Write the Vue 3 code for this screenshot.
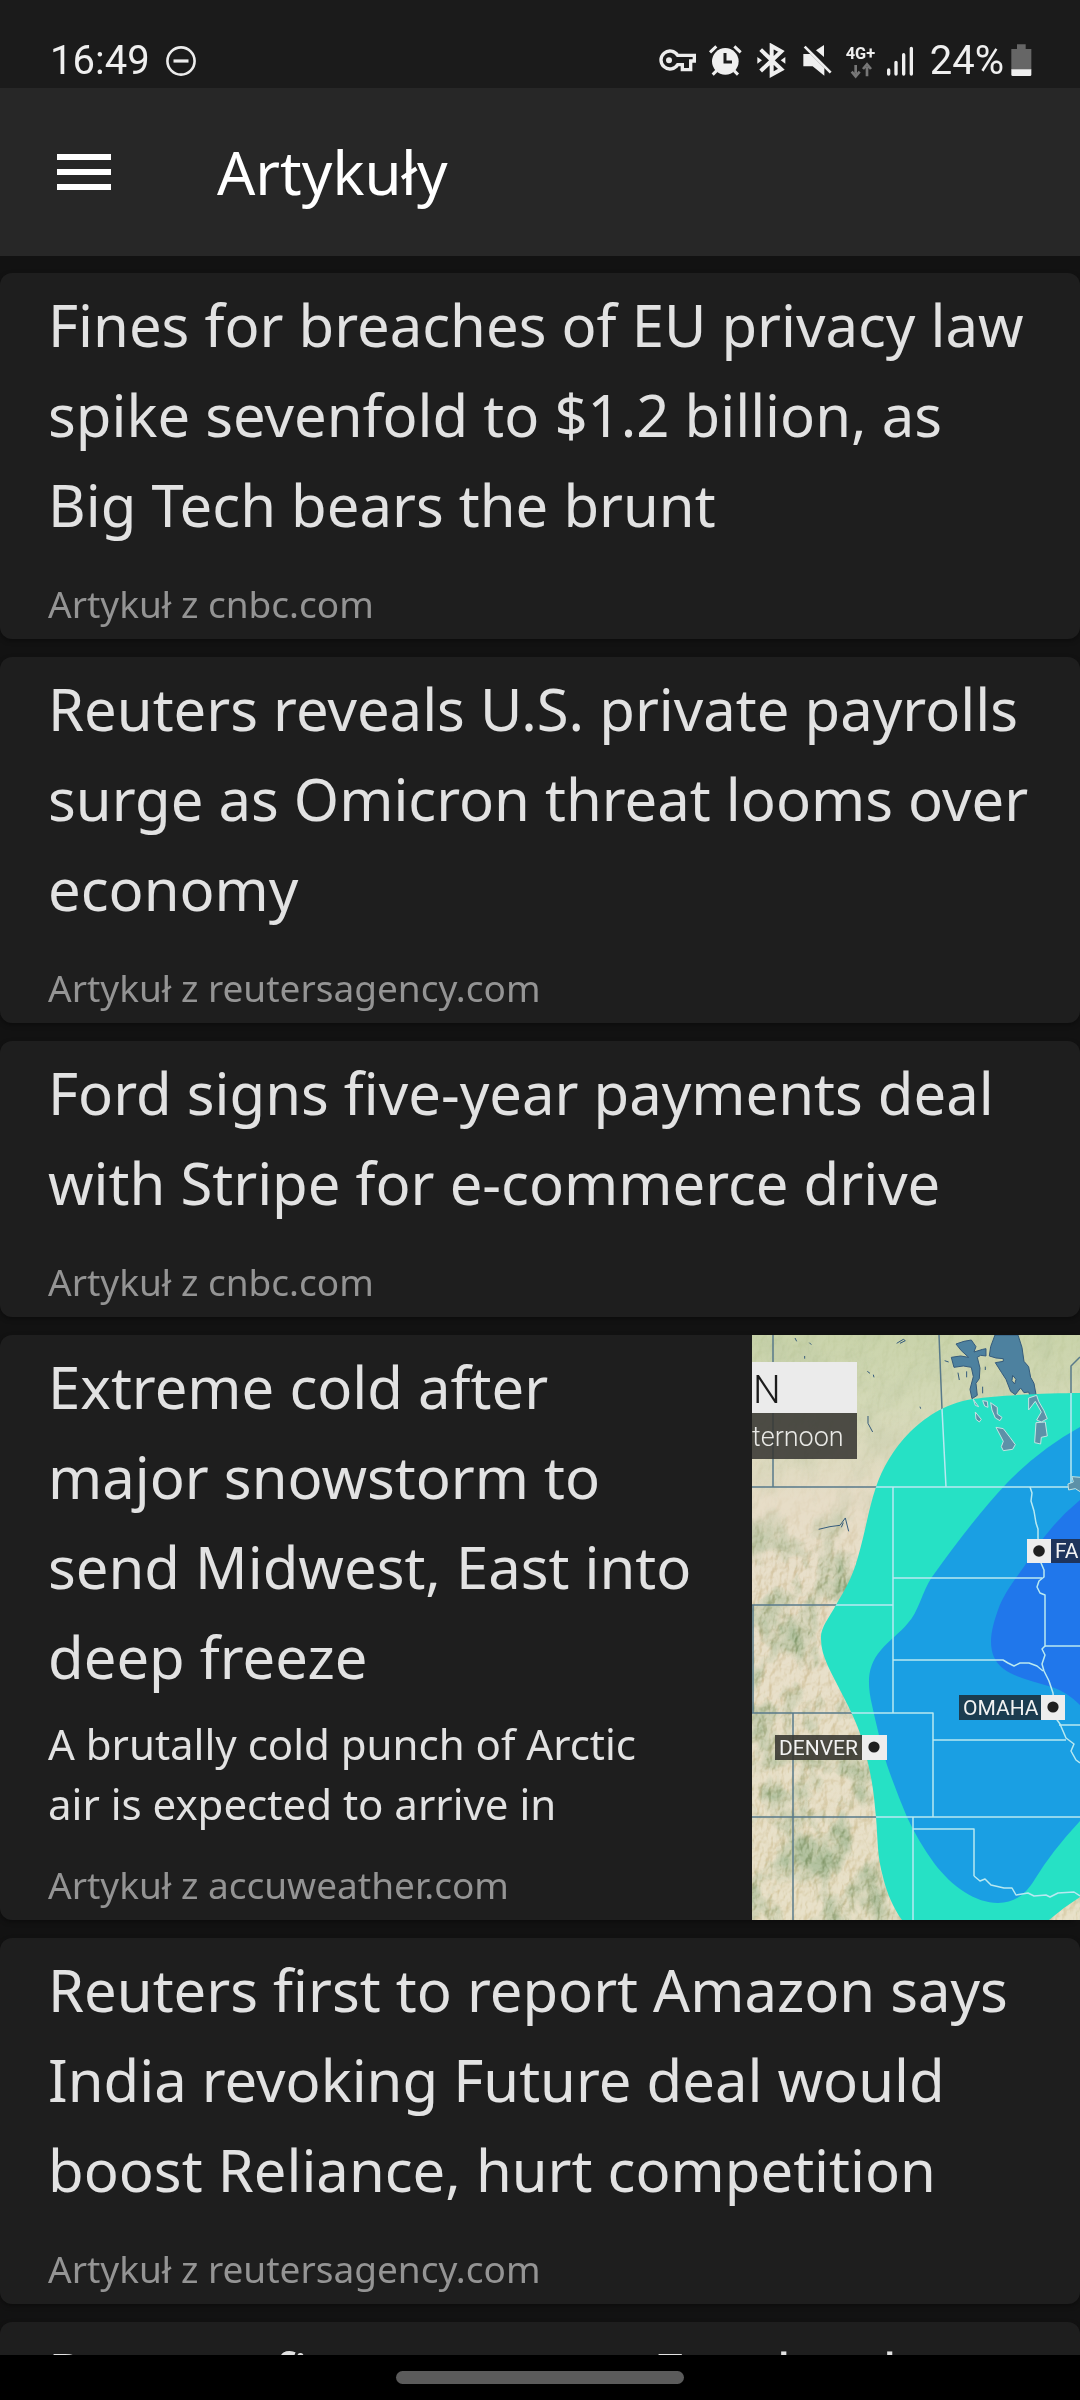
<script setup>
const articles = [
  {
    lines: ['Fines for breaches of EU privacy law', 'spike sevenfold to $1.2 billion, as', 'Big Tech bears the brunt'],
    source: 'cnbc.com'
  },
  {
    lines: ['Reuters reveals U.S. private payrolls', 'surge as Omicron threat looms over', 'economy'],
    source: 'reutersagency.com'
  },
  {
    lines: ['Ford signs five-year payments deal', 'with Stripe for e-commerce drive'],
    source: 'cnbc.com'
  },
  {
    lines: ['Extreme cold after', 'major snowstorm to', 'send Midwest, East into', 'deep freeze'],
    summary: ['A brutally cold punch of Arctic', 'air is expected to arrive in'],
    source: 'accuweather.com',
    map: true
  },
  {
    lines: ['Reuters first to report Amazon says', 'India revoking Future deal would', 'boost Reliance, hurt competition'],
    source: 'reutersagency.com'
  },
  { lines: ['Reuters first to report Facebook'] }
]
</script>

<template>
  <div class="screen">
    <div class="status">
      <span class="clock">16:49</span>
      <svg class="dnd" viewBox="0 0 30 30" width="30" height="30" fill="none" stroke="#ececec" aria-hidden="true">
        <circle cx="15" cy="15" r="13.6" stroke-width="2.6" />
        <path d="M7.5 15h15" stroke-width="3.2" />
      </svg>
      <div class="indicators">
        <svg viewBox="50 68 135 108" width="45" height="36" aria-hidden="true">
          <path d="M109 105H159V122H148V148H123V133H109A27 27 0 1 1 109 105Z" fill="none" stroke="#ececec" stroke-width="10" />
          <circle cx="83" cy="120" r="9" fill="#ececec" />
        </svg>
        <svg viewBox="185 68 138 108" width="46" height="36" aria-hidden="true">
          <circle cx="252" cy="123" r="40" fill="#efefef" />
          <path d="M206 96L225 78M298 96L279 78M214 163L226 151M290 163L278 151" stroke="#efefef" stroke-width="9" />
          <path d="M251 98V125H272" fill="none" stroke="#1b1b1b" stroke-width="9" />
        </svg>
        <svg viewBox="323 68 135 108" width="45" height="36" aria-hidden="true">
          <path d="M358 88L420 147L391 163V77L420 93L358 152" fill="none" stroke="#efefef" stroke-width="12" />
          <path d="M348 110L362 120L348 130ZM432 110L418 120L432 130Z" fill="#efefef" />
        </svg>
        <svg viewBox="458 68 135 108" width="45" height="36" aria-hidden="true">
          <path d="M548 74V110L524 90ZM486 101H507L549 143V166L514 138H486Z" fill="#efefef" />
          <path d="M490 79L568 157" stroke="#efefef" stroke-width="8" />
        </svg>
        <svg viewBox="593 68 126 108" width="42" height="36" aria-hidden="true">
          <text class="network" x="613" y="117">4G+</text>
          <path d="M643 134V160M631 154L643 168L655 154M677 168V140M665 146L677 132L689 146" fill="none" stroke="#777" stroke-width="8" />
        </svg>
        <svg viewBox="719 68 138 108" width="46" height="36" aria-hidden="true">
          <path d="M742 149V161M764 126V161M787 103V161M810 84V161" stroke="#efefef" stroke-width="10" stroke-linecap="round" />
        </svg>
        <span class="percent">24%</span>
        <svg class="battery" viewBox="1106 68 72 108" width="24" height="36" aria-hidden="true">
          <path d="M1130 72H1156V86H1173V148H1113V86H1130Z" fill="#666" />
          <path d="M1113 147H1173V163Q1173 167 1169 167H1117Q1113 167 1113 163Z" fill="#efefef" />
        </svg>
      </div>
    </div>

    <header class="toolbar">
      <button class="menu" type="button" aria-label="Menu">
        <svg viewBox="0 0 54 36" width="54" height="36" aria-hidden="true">
          <path d="M0 3H54M0 18H54M0 33H54" stroke="#fff" stroke-width="6" />
        </svg>
      </button>
      <h1>Artykuły</h1>
    </header>

    <main class="list">
      <a v-for="(article, i) in articles" :key="i" class="card" href="#">
        <div class="body">
          <h2>{{ article.lines.join('\n') }}</h2>
          <p v-if="article.summary" class="summary">{{ article.summary.join('\n') }}</p>
          <p v-if="article.source" class="source">Artykuł z {{ article.source }}</p>
        </div>
        <svg v-if="article.map" class="map" viewBox="0 0 328 585" preserveAspectRatio="xMidYMid slice" role="img" aria-label="Weather map">
          <defs>
            <linearGradient id="land" x1="0" y1="0" x2="0" y2="1">
              <stop offset="0" stop-color="#c9d3aa" />
              <stop offset=".12" stop-color="#d3d8b6" />
              <stop offset=".28" stop-color="#e6dcc6" />
              <stop offset="1" stop-color="#e6dec4" />
            </linearGradient>
            <linearGradient id="fade" x1="0" y1="0" x2="0" y2="1">
              <stop offset=".28" stop-color="#333" />
              <stop offset=".4" stop-color="#fff" />
            </linearGradient>
            <mask id="hills"><rect width="328" height="585" fill="url(#fade)" /></mask>
            <filter id="forest" x="0" y="0" width="100%" height="100%" color-interpolation-filters="sRGB">
              <feTurbulence type="fractalNoise" baseFrequency=".03 .022" numOctaves="5" seed="8" />
              <feColorMatrix values="0 0 0 0 .68  0 0 0 0 .74  0 0 0 0 .6  3.4 0 0 0 -1.5" />
            </filter>
            <filter id="relief" x="0" y="0" width="100%" height="100%" color-interpolation-filters="sRGB">
              <feTurbulence type="fractalNoise" baseFrequency=".11 .07" numOctaves="4" seed="3" result="n" />
              <feDiffuseLighting in="n" surfaceScale="5" diffuseConstant=".6" lighting-color="#fff">
                <feDistantLight azimuth="225" elevation="58" />
              </feDiffuseLighting>
            </filter>
            <path id="cold" d="M328 58C300 58 250 60 221 64C190 69 172 84 158 97C141 114 130 134 124 152C117 172 114 194 106 222C100 244 92 256 84 270C77 283 68 293 69 304C69 322 80 338 88 355C101 380 109 396 114 420C121 447 122 462 124 482C126 506 125 520 131 542C135 559 142 574 150 585H297Q312 572 328 562Z" />
            <clipPath id="cold-area"><use href="#cold" /></clipPath>
            <g id="borders" fill="none" stroke-width="1.5" stroke-linejoin="round">
              <path d="M21 0V152M187 0L190 74L194 152M0 152H316M328 22L319 31V152M141 152V378M141 243H290M0 270H141M1 270V378M0 378H181V482M181 405H314M0 482H328M41 378V585M161 482V585M161 494H222V541M307 390H328M293 311H328" />
              <path d="M278 152L280 158L279 166L282 176L284 188L286 194L286 203L289 228L292 235L292 242L287 246L285 252L288 258L293 260V311L290 314L293 320L290 329L292 336L297 346L301 358L303 382L308 389L314 403L322 409L319 416L324 425L328 428M141 325H251L256 328L262 331L268 328L277 328L285 331L291 336M222 541L228 546L233 544L239 550L252 553L260 553L264 560L276 558L282 561L294 560L298 562L306 558L322 557L328 561" />
            </g>
          </defs>
          <rect width="328" height="585" fill="url(#land)" />
          <g mask="url(#hills)"><rect width="328" height="585" filter="url(#forest)" /></g>
          <g class="shade" mask="url(#hills)"><rect width="328" height="585" filter="url(#relief)" /></g>
          <use href="#borders" stroke="#58798a" />
          <g fill="#4d819f" stroke="#345a7b" stroke-width="3" transform="translate(-12 -5) scale(.3333)">
            <path d="M765 15L752 50L748 78L768 84L790 86L790 94L766 98L785 128L798 148L812 184L826 194L842 174L852 188L866 186L872 202L890 204L882 160L872 142L866 110L852 94L846 52L834 15Z" />
            <path d="M648 42L672 34L694 30L708 50L702 66L728 58L738 56L738 78L722 76L712 82L720 114L718 146L708 160L712 196L696 206L690 178L700 140L694 112L670 108L642 112L634 82L662 78L686 82L664 62Z" />
            <path d="M818 136L828 148L824 162L816 152Z" fill="#cbd3ad" />
            <path d="M384 258L384 280L398 306M165 24L170 34M208 38L214 44M194 78V86M382 124L390 130M400 134L402 142M540 230L542 236M470 40L490 28L496 32L480 40M614 92L626 96M654 128L658 150M680 124V142M728 170V190M736 110V120M236 598L270 590L300 586L316 564L326 604M310 578L304 592" fill="none" />
          </g>
          <use href="#cold" fill="#26e1c5" />
          <path d="M328 92Q288 114 255 148Q222 183 180 242C170 257 166 278 156 288C148 298 136 306 129 315C115 331 115 348 120 370C124 388 129 410 135 430Q144 456 155 482Q166 506 182 528C200 552 224 568 246 568C263 568 274 559 283 544Q300 516 328 486Z" fill="#1a9fe3" />
          <path d="M328 165Q300 188 281 218C268 239 253 255 246 275C240 292 236 308 242 322C250 340 274 344 300 352Q315 357 328 370Z" fill="#2077eb" />
          <g clip-path="url(#cold-area)"><use href="#borders" stroke="#b9e9f1" /></g>
          <g fill="#5d91a8" stroke="#c3e5e3" stroke-width="3" transform="translate(-12 -5) scale(.3333)">
            <path d="M706 246L724 268L718 276L708 268Z" />
            <path d="M768 292L790 296L810 322L826 344L818 358L790 362L784 350L790 334Z" />
            <path d="M700 208L716 230L706 226ZM728 212L742 214L744 232L734 228ZM752 218L772 232L772 252L786 262L780 272L766 264L756 240ZM866 204L890 196L896 214L912 242L922 266L904 276L890 270L904 246L886 214L866 240Z" />
            <path d="M888 278L916 276L922 318L904 322L902 342L884 338Z" />
            <path d="M984 462L1000 456L996 440L1022 442V486L1006 476L986 480Z" />
          </g>
          <rect y="27" width="105" height="51" fill="#ebebeb" />
          <rect y="78" width="105" height="46" fill="#373632" fill-opacity=".87" />
          <text class="map-title" x="1" y="68">N</text>
          <text class="map-sub" x="0" y="111">ternoon</text>
          <g class="city">
            <rect x="23" y="400" width="87" height="25" fill="#35342f" fill-opacity=".88" />
            <rect x="110" y="400" width="25" height="25" fill="#ededed" />
            <circle cx="122" cy="412" r="5.6" />
            <text x="27" y="420">DENVER</text>
            <rect x="207" y="360" width="82" height="25" fill="#1b3c50" />
            <rect x="289" y="360" width="24" height="25" fill="#ededed" />
            <circle cx="301" cy="372" r="5.6" />
            <text x="211" y="380">OMAHA</text>
            <rect x="275" y="204" width="24" height="24" fill="#ededed" />
            <rect x="299" y="204" width="29" height="24" fill="#1e345c" />
            <circle cx="287" cy="216" r="5.8" />
            <text x="303" y="223">FA</text>
          </g>
        </svg>
      </a>
    </main>

    <div class="nav"><div class="pill"></div></div>
  </div>
</template>

<style>
body { background: #121212; }
</style>

<style scoped>
.screen {
  display: flex;
  flex-direction: column;
  height: 100vh;
  overflow: hidden;
  background: #121212;
  color: #e2e2e2;
  font-family: "Noto Sans", sans-serif;
}
.status {
  display: flex;
  align-items: center;
  flex: none;
  height: 55px;
  padding: 33px 47px 0 50px;
  background: #1b1b1b;
}
.clock, .percent {
  font-family: Roboto, sans-serif;
  font-size: 40px;
  line-height: 54px;
  color: #efefef;
}
.dnd { margin-left: 16px; }
.indicators {
  display: flex;
  align-items: center;
  margin-left: auto;
}
.percent { margin-left: 3px; }
.battery { margin-left: 5px; }
.network {
  font: 700 49px Roboto, sans-serif;
  fill: #efefef;
}
.toolbar {
  display: flex;
  align-items: center;
  flex: none;
  height: 168px;
  padding: 0 57px;
  background: #272727;
}
.menu {
  display: flex;
  padding: 0;
  border: 0;
  background: none;
}
h1 {
  margin: 0 0 0 106px;
  font-size: 60px;
  line-height: 90px;
  font-weight: 400;
  color: #fff;
}
.list {
  display: flex;
  flex-direction: column;
  flex: 1;
  min-height: 0;
  gap: 18px;
  padding-top: 17px;
  overflow: hidden;
}
.card {
  display: flex;
  flex: none;
  border-radius: 12px;
  background: #1e1e1e;
  box-shadow: 0 2px 5px rgba(0, 0, 0, .35);
  color: inherit;
  text-decoration: none;
}
.body {
  flex: 1;
  min-width: 0;
  padding: 7px 48px 11px;
}
h2 {
  margin: 0;
  font-size: 58px;
  line-height: 90px;
  font-weight: 400;
  white-space: pre;
}
.summary {
  margin: 12px 0 0;
  font-size: 42px;
  line-height: 60px;
  white-space: pre;
}
.source {
  margin: 30px 0 0;
  font-size: 37px;
  line-height: 48px;
  color: #949494;
}
.summary + .source { margin-top: 27px; }
.map {
  flex: none;
  align-self: stretch;
  width: 328px;
}
.shade { mix-blend-mode: soft-light; }
.map-title { font: 300 39px Roboto, sans-serif; fill: #1c1c1c; }
.map-sub { font: 300 27px Roboto, sans-serif; fill: #e9e9e6; }
.city { font: 400 21px Roboto, sans-serif; fill: #1f1f1f; }
.city text { fill: #f2f2f2; }
.nav {
  display: flex;
  justify-content: center;
  flex: none;
  height: 29px;
  padding-top: 16px;
  background: #000;
}
.pill {
  width: 288px;
  height: 13px;
  border-radius: 7px;
  background: #5b5b5b;
}
</style>
